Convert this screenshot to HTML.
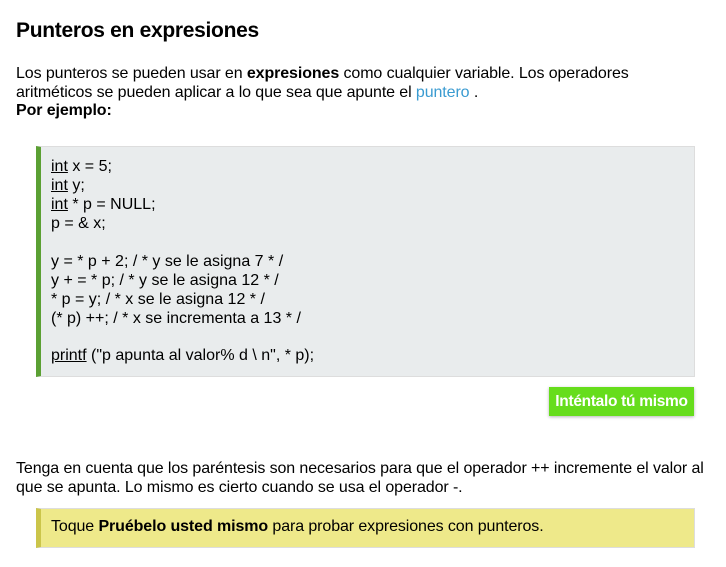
<!DOCTYPE html>
<html><head><meta charset="utf-8"><style>
body{margin:0;width:726px;height:567px;background:#fff;font-family:"Liberation Sans",sans-serif;color:#000;position:relative;overflow:hidden}
.l{position:absolute;white-space:nowrap;font-size:16px;letter-spacing:-0.1px;line-height:18px}
h1{position:absolute;left:16px;top:18px;margin:0;font-size:21px;font-weight:bold;letter-spacing:-0.3px;line-height:26px}
.code{position:absolute;left:36px;top:146px;width:653px;height:229px;background:#e9eced;border-left:5px solid #5ba033;border-top:1px solid #ddd;border-bottom:1px solid #ddd;border-right:1px solid #ddd}
.c{position:absolute;left:51px;white-space:nowrap;font-size:16px;letter-spacing:0px;line-height:19px}
u{text-decoration:underline}
.btn{position:absolute;left:549px;top:387px;width:145px;height:29px;background:#66dd1c;color:#fff;font-weight:bold;font-size:15.5px;line-height:29px;text-align:center;letter-spacing:-0.3px;box-shadow:0 1px 3px rgba(0,0,0,.3)}
.note{position:absolute;left:36px;top:508px;width:653px;height:38px;background:#eee98a;border-left:5px solid #cbc54a;border-top:1px solid #ddd;border-bottom:1px solid #ddd;border-right:1px solid #ddd}
a{color:#3a9bd1;text-decoration:none}
</style></head><body>
<h1>Punteros en expresiones</h1>
<div class="l" style="left:16px;top:65px">Los punteros se pueden usar en <b>expresiones</b> como cualquier variable. Los operadores</div>
<div class="l" style="left:16px;top:84px">aritméticos se pueden aplicar a lo que sea que apunte el <a>puntero</a> .</div>
<div class="l" style="left:16px;top:102px"><b>Por ejemplo:</b></div>
<div class="code"></div>
<div class="c" style="top:157px"><u>int</u> x = 5;</div>
<div class="c" style="top:176px"><u>int</u> y;</div>
<div class="c" style="top:195px"><u>int</u> * p = NULL;</div>
<div class="c" style="top:214px">p = &amp; x;</div>
<div class="c" style="top:252px">y = * p + 2; / * y se le asigna 7 * /</div>
<div class="c" style="top:271px">y + = * p; / * y se le asigna 12 * /</div>
<div class="c" style="top:290px">* p = y; / * x se le asigna 12 * /</div>
<div class="c" style="top:309px">(* p) ++; / * x se incrementa a 13 * /</div>
<div class="c" style="top:346px"><u>printf</u> ("p apunta al valor% d \ n", * p);</div>
<div class="btn">Inténtalo tú mismo</div>
<div class="l" style="left:16px;top:460px">Tenga en cuenta que los paréntesis son necesarios para que el operador ++ incremente el valor al</div>
<div class="l" style="left:16px;top:479px">que se apunta. Lo mismo es cierto cuando se usa el operador -.</div>
<div class="note"></div>
<div class="l" style="left:51px;top:518px">Toque <b>Pruébelo usted mismo</b> para probar expresiones con punteros.</div>
</body></html>
